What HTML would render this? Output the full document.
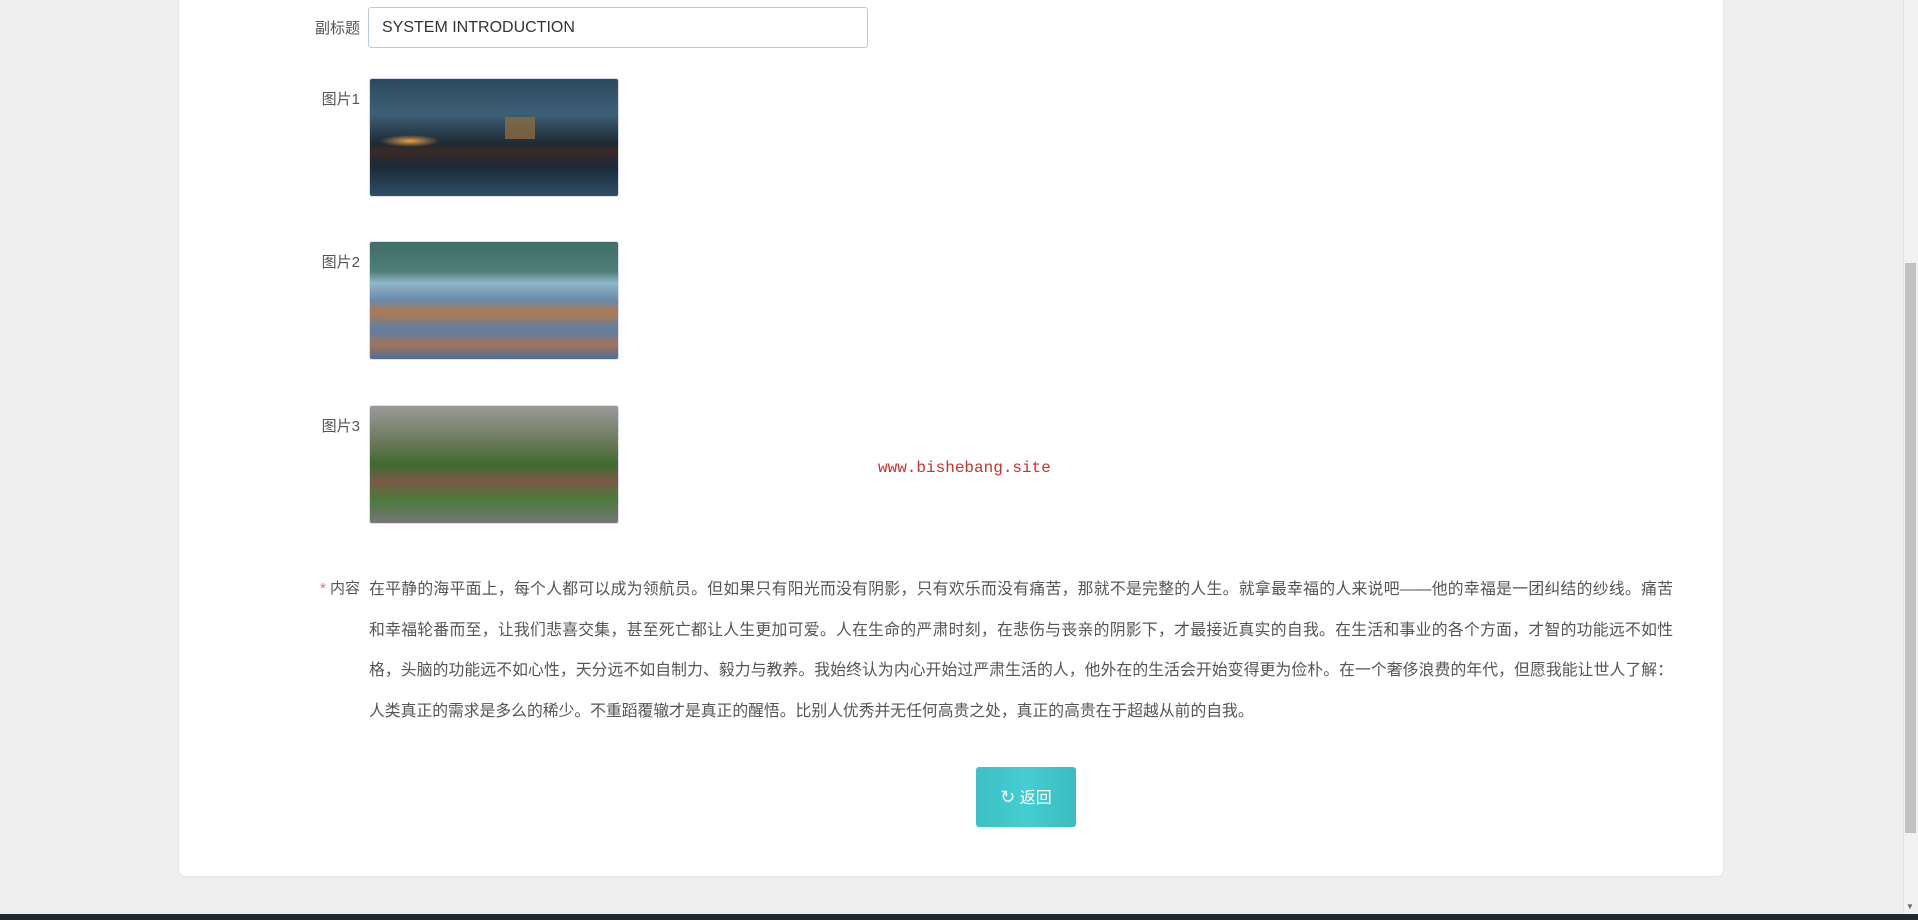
<!DOCTYPE html>
<html><head><meta charset="utf-8"><style>
*{margin:0;padding:0;box-sizing:border-box}
body{width:1918px;height:920px;background:#efefef;position:relative;overflow:hidden;font-family:"Liberation Sans","Noto Sans CJK SC",sans-serif;color:#555}
.card{position:absolute;left:179px;top:-10px;width:1544px;height:886px;background:#fff;border-radius:6px;box-shadow:0 0 2px rgba(0,0,0,.12)}
.lbl{position:absolute;width:120px;left:240px;text-align:right;font-size:15px;color:#555}
.inp{position:absolute;left:368px;top:7px;width:500px;height:41px;border:1px solid #b9cbd9;border-radius:3px;padding-left:13px;line-height:39px;font-size:16px;color:#333}
.img{position:absolute;left:369px;width:250px;height:119px;border-radius:3px;border:1px solid #dde;overflow:hidden}
.txt{position:absolute;left:369px;top:570px;width:1304px;font-size:15.8px;line-height:40.5px;color:#555}
.txt div{text-align:justify;text-align-last:justify;white-space:nowrap}
.txt div.l{text-align-last:left}
.btn{position:absolute;left:976px;top:767px;width:100px;height:60px;border-radius:3px;background:linear-gradient(90deg,#3cc0c4,#45cdd0,#39bcc0);color:#fff;font-size:16px;text-align:center;line-height:60px}
</style></head><body>
<div class="card"></div>
<div class="lbl" style="top:17px">副标题</div>
<div class="inp">SYSTEM INTRODUCTION</div>
<div class="lbl" style="top:88px">图片1</div>
<div class="img" style="top:78px;background:linear-gradient(180deg,#2c4a5e 0%,#3d5f76 30%,#1e2a33 55%,#3a2a26 62%,#1a2a38 75%,#2f4e66 100%)">
<div style="position:absolute;left:10px;top:56px;width:60px;height:12px;background:radial-gradient(ellipse,#f0a040,transparent 70%)"></div>
<div style="position:absolute;left:135px;top:38px;width:30px;height:22px;background:#8a6a40;opacity:.8"></div></div>
<div class="lbl" style="top:251px">图片2</div>
<div class="img" style="top:241px;background:linear-gradient(180deg,#3f6e6a 0%,#4f7d78 25%,#8fb6c8 35%,#6a8aa8 50%,#b07a50 60%,#5d7ea6 75%,#a2745a 88%,#4d6e98 100%)"></div>
<div class="lbl" style="top:415px">图片3</div>
<div class="img" style="top:405px;background:linear-gradient(180deg,#9a9a9a 0%,#6c7a5a 30%,#3f6a30 50%,#7a5a48 65%,#4a7a3a 80%,#777 100%)"></div>
<div style="position:absolute;left:878px;top:459px;font-family:'Liberation Mono',monospace;font-size:16px;color:#d0302a">www.bishebang.site</div>
<div class="lbl" style="top:577px"><span style="color:#f56c6c">*</span> 内容</div>
<div class="txt"><div>在平静的海平面上，每个人都可以成为领航员。但如果只有阳光而没有阴影，只有欢乐而没有痛苦，那就不是完整的人生。就拿最幸福的人来说吧——他的幸福是一团纠结的纱线。痛苦</div><div>和幸福轮番而至，让我们悲喜交集，甚至死亡都让人生更加可爱。人在生命的严肃时刻，在悲伤与丧亲的阴影下，才最接近真实的自我。在生活和事业的各个方面，才智的功能远不如性</div><div>格，头脑的功能远不如心性，天分远不如自制力、毅力与教养。我始终认为内心开始过严肃生活的人，他外在的生活会开始变得更为俭朴。在一个奢侈浪费的年代，但愿我能让世人了解：</div><div class="l">人类真正的需求是多么的稀少。不重蹈覆辙才是真正的醒悟。比别人优秀并无任何高贵之处，真正的高贵在于超越从前的自我。</div></div>
<div class="btn"><span style="font-size:18px">&#x21bb;</span> 返回</div>
<div style="position:absolute;left:1903px;top:0;width:15px;height:914px;background:#f1f1f1;border-left:1px solid #e4e4e4"></div>
<div style="position:absolute;left:1905px;top:263px;width:11px;height:570px;background:#c1c1c1"></div>
<div style="position:absolute;left:1906px;top:902px;font-size:8px;color:#666">▼</div>
<div style="position:absolute;left:0;top:914px;width:1918px;height:6px;background:#1f2a33"></div>
</body></html>
